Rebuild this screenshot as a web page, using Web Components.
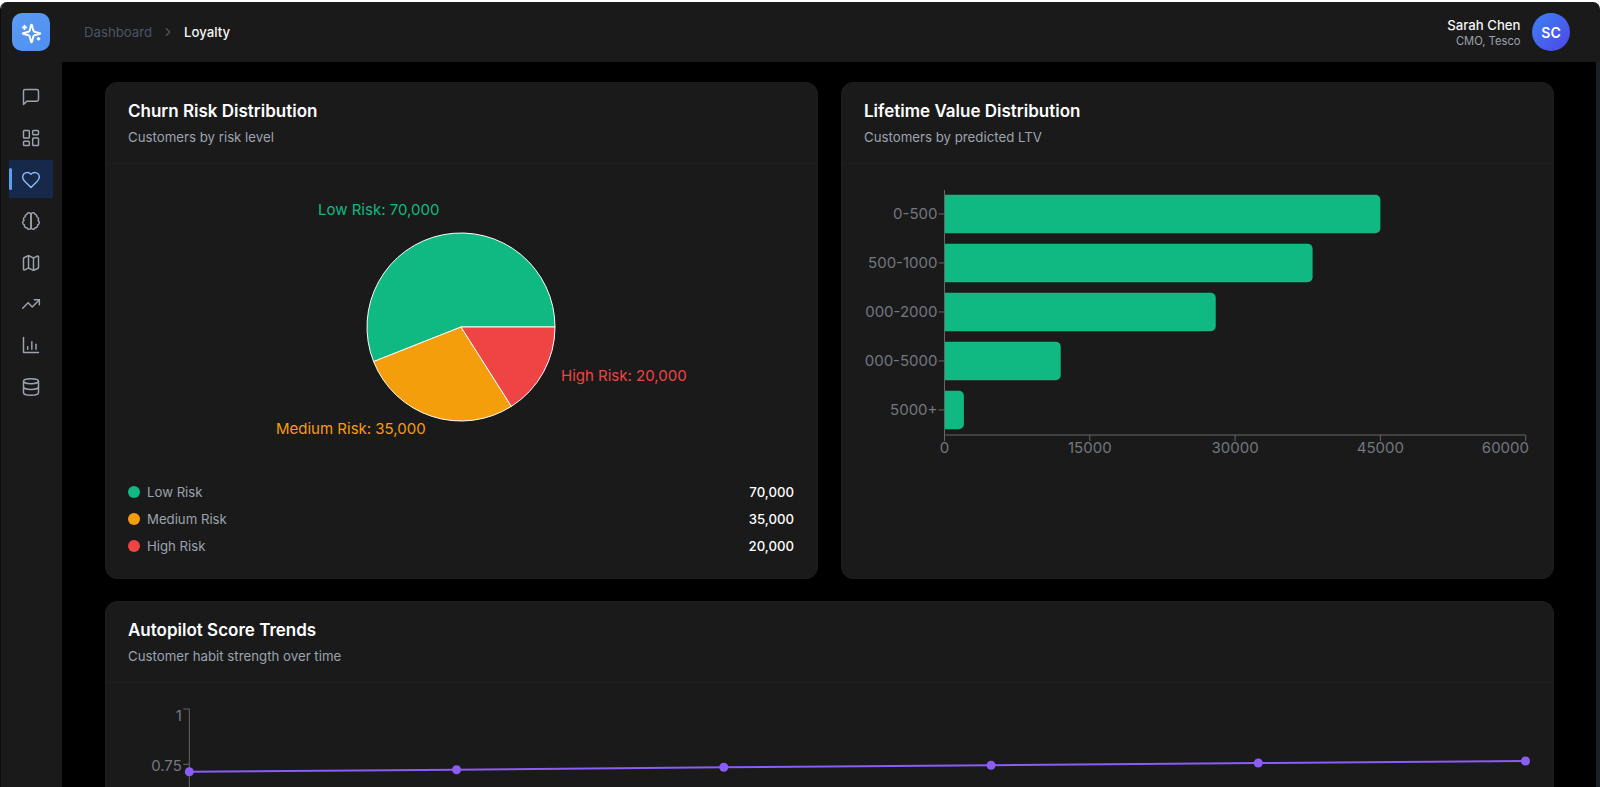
<!DOCTYPE html>
<html lang="en">
<head>
<meta charset="utf-8">
<title>Loyalty</title>
<style>
  html, body { margin: 0; height: 787px; overflow: hidden; background: #fff; font-family: Inter, "Liberation Sans", sans-serif; }
</style>
</head>
<body>
<app-shell>
  <top-bar slot="top" section="Dashboard" page="Loyalty">
    <user-chip name="Sarah Chen" role="CMO, Tesco" initials="SC"></user-chip>
  </top-bar>
  <side-nav slot="side">
    <nav-item icon="message"></nav-item>
    <nav-item icon="dashboard"></nav-item>
    <nav-item icon="heart" active></nav-item>
    <nav-item icon="brain"></nav-item>
    <nav-item icon="map"></nav-item>
    <nav-item icon="trending"></nav-item>
    <nav-item icon="bars"></nav-item>
    <nav-item icon="database"></nav-item>
  </side-nav>
  <chart-card heading="Churn Risk Distribution" sub="Customers by risk level">
    <pie-chart></pie-chart>
    <risk-legend>
      <legend-row color="#10b981" label="Low Risk" value="70,000"></legend-row>
      <legend-row color="#f59e0b" label="Medium Risk" value="35,000"></legend-row>
      <legend-row color="#ef4444" label="High Risk" value="20,000"></legend-row>
    </risk-legend>
  </chart-card>
  <chart-card heading="Lifetime Value Distribution" sub="Customers by predicted LTV">
    <bar-chart></bar-chart>
  </chart-card>
  <chart-card wide heading="Autopilot Score Trends" sub="Customer habit strength over time">
    <line-chart></line-chart>
  </chart-card>
</app-shell>

<script>
const ICONS = {
  message: '<path d="M21 15a2 2 0 0 1-2 2H7l-4 4V5a2 2 0 0 1 2-2h14a2 2 0 0 1 2 2z"/>',
  dashboard: '<rect x="3" y="3" width="7" height="9" rx="1"/><rect x="14" y="3" width="7" height="5" rx="1"/><rect x="14" y="12" width="7" height="9" rx="1"/><rect x="3" y="16" width="7" height="5" rx="1"/>',
  heart: '<path d="M19 14c1.49-1.46 3-3.21 3-5.5A5.5 5.5 0 0 0 16.5 3c-1.76 0-3 .5-4.5 2-1.5-1.5-2.74-2-4.5-2A5.5 5.5 0 0 0 2 8.5c0 2.3 1.5 4.05 3 5.5l7 7Z"/>',
  brain: '<path d="M9.5 2A2.5 2.5 0 0 1 12 4.5v15a2.5 2.5 0 0 1-4.96.44 2.5 2.5 0 0 1-2.96-3.08 3 3 0 0 1-.34-5.58 2.5 2.5 0 0 1 1.32-4.24 2.5 2.5 0 0 1 1.98-3A2.5 2.5 0 0 1 9.5 2Z"/><path d="M14.5 2A2.5 2.5 0 0 0 12 4.5v15a2.5 2.5 0 0 0 4.96.44 2.5 2.5 0 0 0 2.96-3.08 3 3 0 0 0 .34-5.58 2.5 2.5 0 0 0-1.32-4.24 2.5 2.5 0 0 0-1.98-3A2.5 2.5 0 0 0 14.5 2Z"/>',
  map: '<path d="M14.106 5.553a2 2 0 0 0 1.788 0l3.659-1.83A1 1 0 0 1 21 4.619v12.764a1 1 0 0 1-.553.894l-4.553 2.277a2 2 0 0 1-1.788 0l-4.212-2.106a2 2 0 0 0-1.788 0l-3.659 1.83A1 1 0 0 1 3 19.381V6.618a1 1 0 0 1 .553-.894l4.553-2.277a2 2 0 0 1 1.788 0z"/><path d="M15 5.764v15"/><path d="M9 3.236v15"/>',
  trending: '<polyline points="22 7 13.5 15.5 8.5 10.5 2 17"/><polyline points="16 7 22 7 22 13"/>',
  bars: '<path d="M3 3v18h18"/><path d="M8 17v-3"/><path d="M13 17V8"/><path d="M18 17v-6"/>',
  database: '<ellipse cx="12" cy="5" rx="9" ry="3"/><path d="M3 5V19A9 3 0 0 0 21 19V5"/><path d="M3 12A9 3 0 0 0 21 12"/>'
};

class AppShell extends HTMLElement {
  connectedCallback() {
    this.attachShadow({ mode: "open" }).innerHTML = `
      <style>
        :host { display: block; height: 785px; margin-top: 2px; border-left: 1px solid #0d0d0d; border-radius: 7px 7px 0 0; overflow: hidden; box-sizing: border-box; }
        .top { height: 60px; }
        .row { display: flex; height: 725px; }
        .main { flex: 1; min-width: 0; background: #000; border-right: 4px solid #1b1f27; padding: 20px 42px 0 43px; overflow: hidden; box-sizing: border-box; display: grid; grid-template-columns: 1fr 1fr; grid-auto-rows: min-content; gap: 22px 23px; }
      </style>
      <div class="top"><slot name="top"></slot></div>
      <div class="row">
        <slot name="side"></slot>
        <div class="main"><slot></slot></div>
      </div>
    `;
  }
}

class TopBar extends HTMLElement {
  connectedCallback() {
    this.attachShadow({ mode: "open" }).innerHTML = `
      <style>
        :host { display: flex; align-items: center; height: 60px; background: #1a1a1a; padding: 0 30px 0 11px; box-sizing: border-box; }
        .logo { width: 38px; height: 38px; border-radius: 10px; background: linear-gradient(135deg, #5b9cf5, #4f8ef0); display: flex; align-items: center; justify-content: center; }
        .logo svg { width: 21px; height: 21px; transform: translateY(1px) scaleX(-1); }
        .crumbs { display: flex; align-items: center; margin-left: 34px; font-size: 13.2px; line-height: 20px; }
        .section { color: #4b5563; }
        .crumbs svg { width: 14px; height: 14px; margin: 0 9px 0 9px; }
        .page { color: #f5f5f5; font-weight: 500; }
        .right { margin-left: auto; }
      </style>
      <div class="logo">
        <svg viewBox="0 0 24 24" fill="none" stroke="#fff" stroke-width="2.2" stroke-linecap="round" stroke-linejoin="round">
          <path d="M9.937 15.5A2 2 0 0 0 8.5 14.063l-6.135-1.582a.5.5 0 0 1 0-.962L8.5 9.936A2 2 0 0 0 9.937 8.5l1.582-6.135a.5.5 0 0 1 .963 0L14.063 8.5A2 2 0 0 0 15.5 9.937l6.135 1.581a.5.5 0 0 1 0 .964L15.5 14.063a2 2 0 0 0-1.437 1.437l-1.582 6.135a.5.5 0 0 1-.963 0z"/>
          <path d="M20 3v4"/><path d="M22 5h-4"/><path d="M4 17v2"/><path d="M5 18H3"/>
        </svg>
      </div>
      <div class="crumbs">
        <span class="section">${this.getAttribute("section")}</span>
        <svg viewBox="0 0 24 24" fill="none" stroke="#4b5563" stroke-width="2" stroke-linecap="round" stroke-linejoin="round"><path d="m9 18 6-6-6-6"/></svg>
        <span class="page">${this.getAttribute("page")}</span>
      </div>
      <div class="right"><slot></slot></div>
    `;
  }
}

class UserChip extends HTMLElement {
  connectedCallback() {
    this.attachShadow({ mode: "open" }).innerHTML = `
      <style>
        :host { display: flex; align-items: center; gap: 11.5px; }
        .who { text-align: right; }
        .name { font-size: 13.2px; line-height: 18px; font-weight: 500; color: #f3f4f6; }
        .role { font-size: 11.2px; line-height: 15px; color: #9ca3af; }
        .avatar { width: 38px; height: 38px; border-radius: 50%; background: linear-gradient(135deg, #3b82f6, #4f46e5); color: #fff; font-size: 14px; font-weight: 600; display: flex; align-items: center; justify-content: center; }
      </style>
      <div class="who">
        <div class="name">${this.getAttribute("name")}</div>
        <div class="role">${this.getAttribute("role")}</div>
      </div>
      <div class="avatar">${this.getAttribute("initials")}</div>
    `;
  }
}

class SideNav extends HTMLElement {
  connectedCallback() {
    this.attachShadow({ mode: "open" }).innerHTML = `
      <style>
        :host { display: flex; flex-direction: column; gap: 3.4px; width: 61px; flex: none; background: #1a1a1a; padding: 15px 0 0 8px; box-sizing: border-box; }
      </style>
      <slot></slot>
    `;
  }
}

class NavItem extends HTMLElement {
  connectedCallback() {
    const active = this.hasAttribute("active");
    this.attachShadow({ mode: "open" }).innerHTML = `
      <style>
        :host { display: flex; position: relative; width: 44px; height: 38px; align-items: center; justify-content: center; color: #9ca3af; }
        :host([active]) { background: #16294a; color: #8db8f2; }
        svg { width: 20px; height: 20px; margin-top: 2px; }
        .bar { position: absolute; left: 0; top: 8px; width: 3px; height: 22px; border-radius: 2px; background: #5b9cf5; }
      </style>
      ${active ? '<div class="bar"></div>' : ""}
      <svg viewBox="0 0 24 24" fill="none" stroke="currentColor" stroke-width="1.75" stroke-linecap="round" stroke-linejoin="round">${ICONS[this.getAttribute("icon")]}</svg>
    `;
  }
}

class ChartCard extends HTMLElement {
  connectedCallback() {
    this.attachShadow({ mode: "open" }).innerHTML = `
      <style>
        :host { display: block; min-width: 0; background: #1a1a1a; border: 1px solid #1e1e1e; border-radius: 12px; box-sizing: border-box; }
        :host([wide]) { grid-column: 1 / -1; }
        .head { padding: 16px 22px; border-bottom: 1px solid #1c2025; }
        h2 { margin: 0 0 4px; font-size: 17px; line-height: 24px; font-weight: 600; color: #fff; }
        p { margin: 0; font-size: 13.25px; line-height: 20px; color: #9ca3af; }
        .body { padding: 22px; }
      </style>
      <div class="head">
        <h2>${this.getAttribute("heading")}</h2>
        <p>${this.getAttribute("sub")}</p>
      </div>
      <div class="body"><slot></slot></div>
    `;
  }
}

class PieChart extends HTMLElement {
  connectedCallback() {
    const cx = 333, cy = 141, r = 94;
    const parts = [
      { value: 70000, color: "#10b981" },
      { value: 35000, color: "#f59e0b" },
      { value: 20000, color: "#ef4444" }
    ];
    const total = parts.reduce((sum, p) => sum + p.value, 0);
    let angle = 0;
    const slices = parts.map((p) => {
      const next = angle + p.value / total * Math.PI * 2;
      const x1 = cx + r * Math.cos(angle), y1 = cy - r * Math.sin(angle);
      const x2 = cx + r * Math.cos(next), y2 = cy - r * Math.sin(next);
      const big = next - angle > Math.PI ? 1 : 0;
      angle = next;
      return `<path d="M${cx} ${cy}L${x1} ${y1}A${r} ${r} 0 ${big} 0 ${x2} ${y2}Z" fill="${p.color}" stroke="#fff"/>`;
    }).join("");
    this.attachShadow({ mode: "open" }).innerHTML = `
      <style>
        :host { display: block; height: 280px; }
        svg { display: block; width: 100%; height: 280px; font-size: 15px; }
      </style>
      <svg>
        ${slices}
        <text x="190" y="24" dy=".355em" fill="#10b981">Low Risk: 70,000</text>
        <text x="433" y="190" dy=".355em" fill="#ef4444">High Risk: 20,000</text>
        <text x="148" y="243" dy=".355em" fill="#f59e0b">Medium Risk: 35,000</text>
      </svg>
    `;
  }
}

class RiskLegend extends HTMLElement {
  connectedCallback() {
    this.attachShadow({ mode: "open" }).innerHTML = `
      <style>
        :host { display: flex; flex-direction: column; gap: 6.8px; margin-top: 16px; }
      </style>
      <slot></slot>
    `;
  }
}

class LegendRow extends HTMLElement {
  connectedCallback() {
    this.attachShadow({ mode: "open" }).innerHTML = `
      <style>
        :host { display: flex; align-items: center; font-size: 13.2px; line-height: 20px; }
        i { width: 12px; height: 12px; border-radius: 50%; margin-right: 7px; background: ${this.getAttribute("color")}; }
        span { color: #9ca3af; }
        b { margin-left: auto; margin-right: 1px; color: #fff; font-weight: 500; }
      </style>
      <i></i><span>${this.getAttribute("label")}</span><b>${this.getAttribute("value")}</b>
    `;
  }
}

class BarChart extends HTMLElement {
  connectedCallback() {
    const x0 = 80.5, top = 8.7, step = 49, h = 38.5, perUnit = 145.3 / 15000;
    const rows = [["0-500", 45000], ["500-1000", 38000], ["000-2000", 28000], ["000-5000", 12000], ["5000+", 2000]];
    const bars = rows.map(([label, value], i) => {
      const y = top + i * step, w = value * perUnit, mid = y + h / 2;
      return `<path d="M${x0} ${y}h${w - 5}a5 5 0 0 1 5 5v${h - 10}a5 5 0 0 1-5 5h-${w - 5}z" fill="#10b981"/>
        <line x1="${x0 - 6}" x2="${x0}" y1="${mid}" y2="${mid}" stroke="#666"/>
        <text x="${x0 - 7}" y="${mid}" dy=".355em" text-anchor="end">${label}</text>`;
    }).join("");
    const ticks = [0, 15000, 30000, 45000, 60000].map((v) => {
      const x = x0 + v * perUnit;
      const label = v === 60000
        ? `<text x="665" y="262" dy=".355em" text-anchor="end">${v}</text>`
        : `<text x="${x}" y="262" dy=".355em" text-anchor="middle">${v}</text>`;
      return `<line x1="${x}" x2="${x}" y1="249" y2="255" stroke="#666"/>${label}`;
    }).join("");
    this.attachShadow({ mode: "open" }).innerHTML = `
      <style>
        :host { display: block; height: 280px; }
        svg { display: block; width: 100%; height: 280px; font-size: 15px; }
        text { fill: #73777f; }
      </style>
      <svg>
        ${bars}
        <line x1="${x0}" x2="${x0}" y1="4" y2="249" stroke="#666"/>
        <line x1="${x0}" x2="661.7" y1="249" y2="249" stroke="#666"/>
        ${ticks}
      </svg>
    `;
  }
}

class LineChart extends HTMLElement {
  connectedCallback() {
    const ys = [66.7, 64.8, 62.3, 60.3, 58, 56];
    const pts = ys.map((y, i) => [61.3 + i * 267.24, y]);
    const dots = pts.map(([x, y]) => `<circle cx="${x}" cy="${y}" r="4.5" fill="#8b5cf6"/>`).join("");
    this.attachShadow({ mode: "open" }).innerHTML = `
      <style>
        :host { display: block; height: 300px; }
        svg { display: block; width: 100%; height: 300px; font-size: 15px; }
        text { fill: #73777f; }
      </style>
      <svg>
        <line x1="61.3" x2="61.3" y1="4" y2="225" stroke="#666"/>
        <line x1="55.3" x2="61.3" y1="4" y2="4" stroke="#666"/>
        <line x1="55.3" x2="61.3" y1="59.3" y2="59.3" stroke="#666"/>
        <text x="53.8" y="11" dy=".355em" text-anchor="end">1</text>
        <text x="53.8" y="60.3" dy=".355em" text-anchor="end">0.75</text>
        <polyline points="${pts.map((p) => p.join(",")).join(" ")}" fill="none" stroke="#8b5cf6" stroke-width="2"/>
        ${dots}
      </svg>
    `;
  }
}

customElements.define("app-shell", AppShell);
customElements.define("top-bar", TopBar);
customElements.define("user-chip", UserChip);
customElements.define("side-nav", SideNav);
customElements.define("nav-item", NavItem);
customElements.define("chart-card", ChartCard);
customElements.define("pie-chart", PieChart);
customElements.define("risk-legend", RiskLegend);
customElements.define("legend-row", LegendRow);
customElements.define("bar-chart", BarChart);
customElements.define("line-chart", LineChart);
</script>
</body>
</html>
